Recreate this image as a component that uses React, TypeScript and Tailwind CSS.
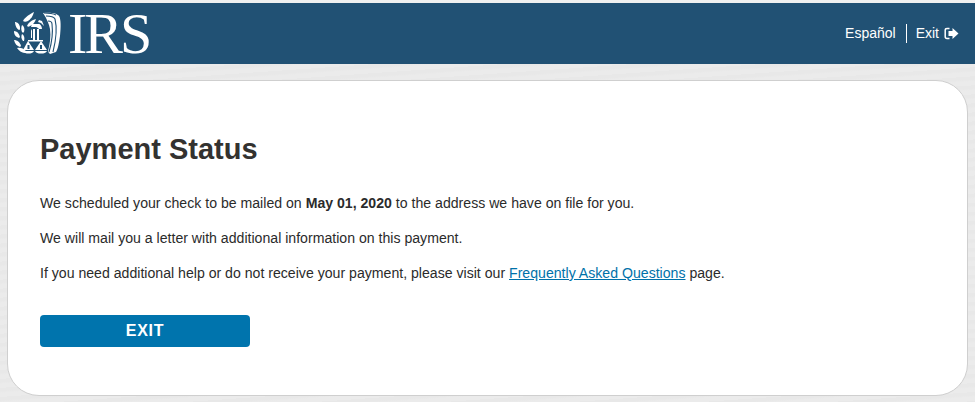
import React from "react";

function Seal() {
  return (
    <svg width="48" height="43" viewBox="0 0 48 43" className="shrink-0" fill="none">
      {/* laurel */}
      <g fill="#fff">
        <path d="M9 9c2-4 7-7 11-9-1 4-3 7-6 9-2 1-4 1-5 0z" />
        <path d="M13 14c1-3 5-6 9-7-1 3-3 6-6 7-1 1-2 1-3 0z" />
        <path d="M1 10c2 0 5 2 5 6 0 1 0 2-1 2-2-1-4-4-4-8z" />
        <path d="M8 13c2 1 3 4 2 7-1 1-1 1-2 0-1-2-1-5 0-7z" />
        <path d="M0 19c3 0 5 2 6 6l-1 1c-3-1-5-3-5-7z" />
        <path d="M8 22c2 1 3 4 2 7l-1 0c-2-2-2-5-1-7z" />
        <path d="M0 28c3 0 6 2 7 6l-1 1c-3-1-5-3-6-7z" />
        <path d="M3 36c3-1 6 0 9 3l0 2c-4 0-7-2-9-5z" />
      </g>
      {/* wing */}
      <path d="M29 1c7-1 14 0 16 3 2 3 2 11 1 20-1 7-2 13-4 16l-6 2c-1-1-2-2-2-3 2-7 3-15 2-22-1-5-3-10-7-16z" fill="#fff" />
      <g stroke="#215174" strokeWidth="1.1">
        <path d="M32 4c4 0 8 1 9 3 2 8 1 21-2 33" />
        <path d="M34 9c2 0 4 1 4 3 1 8 0 18-3 28" />
        <path d="M30 1c5 0 10 1 12 2" />
      </g>
      {/* eagle */}
      <g fill="#fff">
        <path d="M18 12h7c1 0 3 2 3 5h-3c-1-1-2-2-3-2h-5z" />
        <path d="M19 17h2v11h-2zM23 17h2v11h-2z" />
        <path d="M17 19c0-1 1-2 1-2v9h-1z" />
        <path d="M25 8l3 1 2 5-3-3-3-1z" />
        <path d="M14 28h15v1.500H14z" />
      </g>
      {/* scales */}
      <g fill="#fff">
        <path d="M14 29l6 9H9z" />
        <path d="M27 29l6 9H21z" />
        <path d="M9 39h11c-1 2-3 2.500-5.500 2.500S10 41 9 39z" />
        <path d="M21 39h12c-1 2-3 2.500-6 2.500s-5-.5-6-2.500z" />
      </g>
      <path d="M14.500 33v4M27 33v4" stroke="#215174" strokeWidth="2" />
    </svg>
  );
}

function ExitIcon() {
  return (
    <svg width="15" height="13" viewBox="0 0 15 13">
      <path d="M5.500 1.500H3C1.800 1.500 1.200 2.200 1.200 3.200v6.600c0 1 .6 1.700 1.800 1.700h2.500" stroke="#fff" strokeWidth="1.500" fill="none" />
      <path d="M8.500 1L14.500 6.500 8.500 12V9H4.500V4h4z" fill="#fff" />
    </svg>
  );
}

export default function App() {
  return (
    <div className="h-[402px] w-[975px] overflow-hidden bg-[#eaeaea] bg-[repeating-linear-gradient(176deg,#e8e8e8_0px,#e8e8e8_3px,#ebebeb_5px,#ebebeb_9px)] font-['Liberation_Sans',Arial,sans-serif]">
      <div className="h-[3px] bg-[#f0f0f0]" />
      <header className="flex h-[61px] items-center justify-between bg-[#215174] pl-[14px] pr-[16px]">
        <div className="flex items-center gap-[6px]">
          <Seal />
          <span className="font-['Liberation_Serif',serif] text-[58px] leading-none tracking-[-3px] text-white">IRS</span>
        </div>
        <nav className="flex items-center text-[14px] text-white">
          <span>Español</span>
          <span className="mx-[10px] h-[19px] w-px bg-white" />
          <span className="-ml-[1px]">Exit</span>
          <span className="ml-[5px] flex"><ExitIcon /></span>
        </nav>
      </header>
      <main className="mx-[7px] mt-[16px] flex h-[316px] flex-col items-start rounded-[32px] border border-[#cfcfcf] bg-white pl-[32px] pt-[50px] text-[14.12px] leading-[20px] text-[#2b2b2b]">
        <h1 className="text-[29px] font-bold leading-[36px] text-[#333230]">Payment Status</h1>
        <p className="mt-[26px]">We scheduled your check to be mailed on <b>May 01, 2020</b> to the address we have on file for you.</p>
        <p className="mt-[15px]">We will mail you a letter with additional information on this payment.</p>
        <p className="mt-[15px]">If you need additional help or do not receive your payment, please visit our <a href="#" className="text-[#0071a9] underline">Frequently Asked Questions</a> page.</p>
        <button className="mt-[32px] h-[32px] w-[210px] rounded-[4px] bg-[#0074ad] text-[16px] font-bold tracking-[0.7px] text-white">EXIT</button>
      </main>
    </div>
  );
}
